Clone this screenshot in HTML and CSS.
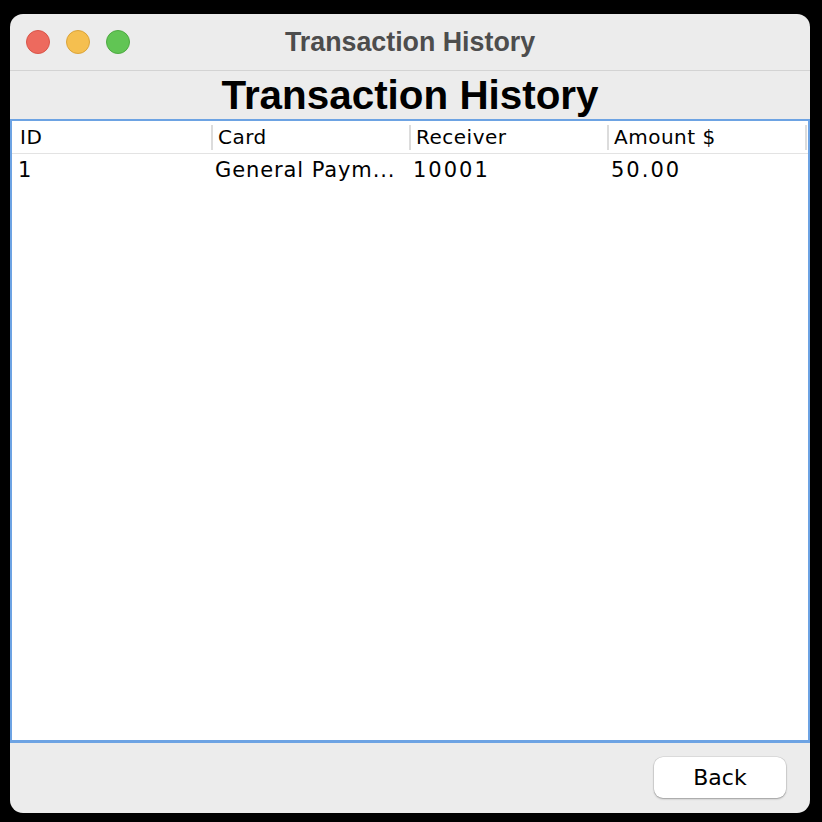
FILE: index.html
```html
<!DOCTYPE html>
<html lang="en">
<head>
<meta charset="utf-8">
<title>Transaction History</title>
<link rel="stylesheet" href="styles.css">
</head>
<body>
<div class="window">
  <div class="titlebar">
    <div class="lights">
      <span class="light red"></span>
      <span class="light yellow"></span>
      <span class="light green"></span>
    </div>
    <div class="wtitle">Transaction History</div>
  </div>
  <h1 class="heading">Transaction History</h1>
  <div class="table">
    <div class="thead">
      <div class="th first">ID</div>
      <div class="th">Card</div>
      <div class="th">Receiver</div>
      <div class="th">Amount $</div>
      <div class="th last"></div>
    </div>
    <div class="row">
      <div class="td first num">1</div>
      <div class="td">General Paym...</div>
      <div class="td num">10001</div>
      <div class="td num">50.00</div>
      <div class="td last"></div>
    </div>
  </div>
  <div class="footer">
    <button class="btn">Back</button>
  </div>
</div>
</body>
</html>
```
FILE: styles.css
```css
html, body {
  margin: 0;
  padding: 0;
  background: #000;
}
body {
  width: 822px;
  height: 822px;
  box-sizing: border-box;
  padding: 14px 12px 9px 10px;
}
.window {
  width: 800px;
  height: 799px;
  background: #ececec;
  border-radius: 13px;
  overflow: hidden;
  display: flex;
  flex-direction: column;
}
.titlebar {
  height: 56px;
  flex: none;
  border-bottom: 1px solid #d3d3d3;
  display: grid;
  grid-template-columns: 1fr;
  align-items: center;
  position: relative;
}
.lights {
  position: absolute;
  left: 16px;
  top: 16px;
  display: flex;
  gap: 16px;
}
.light {
  width: 24px;
  height: 24px;
  border-radius: 50%;
  box-sizing: border-box;
}
.red { background: #ed6a5e; border: 1px solid #d95549; }
.yellow { background: #f5bf4f; border: 1px solid #dba43a; }
.green { background: #61c554; border: 1px solid #4eaa42; }
.wtitle {
  text-align: center;
  font-family: "Liberation Sans", Arial, sans-serif;
  font-weight: bold;
  font-size: 26.8px;
  color: #4d4d4d;
  padding-top: 1px;
}
.heading {
  margin: 0;
  height: 48px;
  flex: none;
  text-align: center;
  font-family: "Liberation Sans", Arial, sans-serif;
  font-weight: bold;
  font-size: 40.4px;
  line-height: 48px;
  color: #000;
}
.table {
  flex: 1;
  background: #fff;
  border: 2px solid #6da3e3;
  border-bottom-width: 3px;
  font-family: "DejaVu Sans", sans-serif;
  color: #000;
}
.thead, .row {
  display: grid;
  grid-template-columns: 199px 198px 198px 198px 1fr;
}
.thead {
  height: 32px;
  border-bottom: 1px solid #e3e3e3;
  font-size: 20px;
}
.th {
  line-height: 32px;
  padding-left: 7px;
  white-space: nowrap;
  letter-spacing: 0.5px;
  background: linear-gradient(#dcdcdc, #dcdcdc) no-repeat left 0 center / 2px 25px;
}
.th.first {
  padding-left: 8px;
  background: none;
}
.row {
  height: 32px;
  font-size: 21px;
}
.td {
  line-height: 32px;
  padding-left: 4px;
  white-space: nowrap;
  letter-spacing: 0.9px;
}
.td.num { letter-spacing: 2px; }
.td.first { padding-left: 6px; }
.footer {
  height: 70px;
  flex: none;
  display: flex;
  justify-content: flex-end;
  align-items: center;
  padding-right: 24px;
}
.btn {
  width: 132px;
  height: 41px;
  margin-top: -1px;
  background: #fff;
  border: none;
  border-radius: 9px;
  box-shadow: 0 0 0 0.5px rgba(0,0,0,0.12), 0 1px 2px rgba(0,0,0,0.3);
  font-family: "DejaVu Sans", sans-serif;
  font-size: 22px;
  color: #000;
  padding: 0;
}
```
